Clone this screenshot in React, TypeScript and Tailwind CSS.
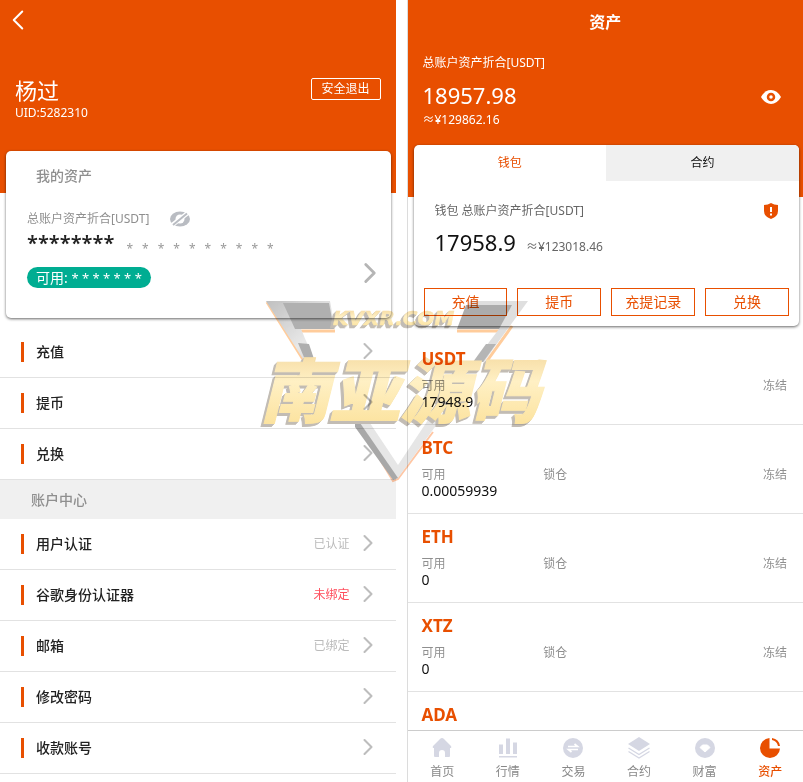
import type { FC, ReactNode } from "react";
import { ChevronLeft, ChevronRight } from "lucide-react";

type MenuItem = { label: string; status?: string; alert?: boolean };
type Coin = { name: string; amount?: string; locked?: boolean };
type NavItem = { label: string; icon: ReactNode; active?: boolean };

const walletMenu: MenuItem[] = [
    { label: "充值" },
    { label: "提币" },
    { label: "兑换" },
];

const accountMenu: MenuItem[] = [
    { label: "用户认证", status: "已认证" },
    { label: "谷歌身份认证器", status: "未绑定", alert: true },
    { label: "邮箱", status: "已绑定" },
    { label: "修改密码" },
    { label: "收款账号" },
];

const coins: Coin[] = [
    { name: "USDT", amount: "17948.9" },
    { name: "BTC", amount: "0.00059939", locked: true },
    { name: "ETH", amount: "0", locked: true },
    { name: "XTZ", amount: "0", locked: true },
    { name: "ADA" },
];

const actions = ["充值", "提币", "充提记录", "兑换"];

const navItems: NavItem[] = [
    {
        label: "首页",
        icon: (
            <path d="M11 1 Q12 1 13 2 L20 9 Q21 11 19 11 V19 Q19 20 18 20 H14 V16 a3 3 0 0 0 -6 0 V20 H4 Q3 20 3 19 V11 Q1 11 2 9 L9 2 Q10 1 11 1 Z" />
        ),
    },
    {
        label: "行情",
        icon: (
            <path d="M2 7.5h4v9.5h-4z M9 1.5h4v15.5h-4z M16 5.5h4v11.5h-4z M2 19h18v1.5h-18z" />
        ),
    },
    {
        label: "交易",
        icon: (
            <>
                <circle cx="11" cy="11" r="10" />
                <path
                    d="M6 9.5 H15.5 L12.5 7 M16 12.5 H6.5 L9.5 15"
                    fill="none"
                    stroke="#fff"
                    strokeWidth="1.7"
                />
            </>
        ),
    },
    {
        label: "合约",
        icon: (
            <>
                <path d="M11 0 L22 7 L11 14 L0 7 Z" />
                <path
                    d="M0.5 11 L11 17.5 L21.5 11 M0.5 14.5 L11 21 L21.5 14.5"
                    fill="none"
                    stroke="currentColor"
                    strokeWidth="1.3"
                />
            </>
        ),
    },
    {
        label: "财富",
        icon: (
            <>
                <circle cx="11" cy="11" r="10" />
                <path
                    d="M8.5 8 H13.5 L16 10.5 L11 15 L6 10.5 Z"
                    fill="#fff"
                    stroke="#fff"
                    strokeLinejoin="round"
                />
            </>
        ),
    },
    {
        label: "资产",
        active: true,
        icon: (
            <>
                <path d="M10.5 1 V11.5 H21 A10 10 0 1 1 10.5 1 Z" />
                <path d="M13 1 A9.5 9.5 0 0 1 21 9 H19 A8 8 0 0 0 13 3 Z" />
            </>
        ),
    },
];

const MenuRow: FC<MenuItem> = ({ label, status, alert }) => (
    <li className="border-b border-[#e2e2e2]">
        <a href="#" className="flex h-[50px] items-center pl-[21px] pr-[14px]">
            <span className="h-5 w-[3px] bg-[#e84f00]" />
            <span className="ml-3 flex-1 text-sm font-medium text-[#222]">
                {label}
            </span>
            {status && (
                <span
                    className={
                        alert
                            ? "mr-1 text-xs text-[#ff4f5e]"
                            : "mr-1 text-xs text-[#bbb]"
                    }
                >
                    {status}
                </span>
            )}
            <ChevronRight
                size={28}
                className="mb-[3px] text-[#bdbdbd]"
                strokeWidth={1.8}
            />
        </a>
    </li>
);

const ProfilePanel: FC = () => (
    <section className="min-w-0 flex-1 bg-white">
        <header className="h-[193px] bg-[#e84f00] px-[15px] text-white">
            <div className="flex h-10 items-center">
                <button type="button" aria-label="返回" className="-ml-[14px]">
                    <ChevronLeft size={34} strokeWidth={1.4} />
                </button>
            </div>
            <div className="flex items-start justify-between pt-9">
                <div>
                    <h1 className="text-[22px] leading-7">杨过</h1>
                    <p className="text-xs leading-[18px]">UID:5282310</p>
                </div>
                <button
                    type="button"
                    className="mt-[2px] h-[22px] w-[70px] rounded-xs border border-white text-xs"
                >
                    安全退出
                </button>
            </div>
        </header>

        <div className="relative -mt-[42px] mr-[5px] ml-[6px] flex h-[167px] flex-col rounded-[5px] bg-white pl-[21px] shadow-[0_1px_3px_rgba(0,0,0,0.6)]">
            <h2 className="ml-[9px] mt-[14px] text-sm leading-[22px] font-medium text-[#8f8f8f]">
                我的资产
            </h2>
            <div className="mt-[22px] flex items-center gap-5 text-xs leading-5 text-[#8f8f8f]">
                总账户资产折合[USDT]
                <button type="button" aria-label="显示资产">
                    <svg width="22" height="18" viewBox="0 0 22 18">
                        <ellipse cx="11" cy="9" rx="10" ry="7.5" fill="#b9bcc2" />
                        <circle cx="11" cy="9" r="4.5" fill="#fff" />
                        <path d="M2 16 L20 2" stroke="#fff" strokeWidth="4.5" />
                        <path d="M4 15 L18 3.500" stroke="#b9bcc2" strokeWidth="2" />
                    </svg>
                </button>
            </div>
            <div className="flex h-7 items-center gap-3">
                <span className="text-xl leading-7 font-semibold text-[#222]">
                    ********
                </span>
                <span className="flex gap-[9px] pt-3 text-xs text-[#999]">
                    {Array.from({ length: 10 }, (_, i) => (
                        <span key={i}>*</span>
                    ))}
                </span>
            </div>
            <div className="mt-[7px] flex items-center justify-between">
                <span className="h-[21px] rounded-full bg-[#00ad92] px-[9px] text-sm leading-[21px] text-white">
                    可用: <span className="text-[13px]">* * * * * * *</span>
                </span>
                <ChevronRight
                    size={34}
                    strokeWidth={2}
                    className="-mt-2 mr-1 text-[#b5b5b5]"
                />
            </div>
        </div>

        <ul className="mt-[9px]">
            {walletMenu.map((item) => (
                <MenuRow key={item.label} {...item} />
            ))}
        </ul>
        <h2 className="h-[39px] bg-[#f0f0f0] pl-[31px] text-sm leading-[40px] font-medium text-[#8f8f8f]">
            账户中心
        </h2>
        <ul>
            {accountMenu.map((item) => (
                <MenuRow key={item.label} {...item} />
            ))}
        </ul>
    </section>
);

const CoinRow: FC<Coin> = ({ name, amount, locked }) => (
    <li className="h-[89px] shrink-0 border-b border-[#e2e2e2] pl-[14px] pr-4 pt-[11px]">
        <h3 className="text-[17px] leading-6 font-bold text-[#e84f00]">{name}</h3>
        {amount && (
            <dl className="mt-[7px] grid grid-cols-3 text-xs leading-4 text-[#8f8f8f]">
                <div>
                    <dt>可用</dt>
                    <dd className="text-sm leading-4 text-[#111]">{amount}</dd>
                </div>
                <dt>{locked && "锁仓"}</dt>
                <dt className="text-right">冻结</dt>
            </dl>
        )}
    </li>
);

const AssetsPanel: FC = () => (
    <section className="flex h-screen min-w-0 flex-1 flex-col border-l border-[#dcdcdc] bg-white">
        <header className="h-[197px] shrink-0 bg-[#e84f00] px-[15px] text-white">
            <h1 className="text-center text-base leading-[44px] font-bold">
                资产
            </h1>
            <p className="mt-[9px] text-xs leading-5">总账户资产折合[USDT]</p>
            <div className="flex items-center justify-between pr-[7px] pt-2">
                <p className="text-[22px] leading-7">18957.98</p>
                <button type="button" aria-label="隐藏资产" className="pt-1">
                    <svg width="20" height="14" viewBox="0 0 20 14">
                        <path
                            d="M0 7 Q4 0 10 0 T20 7 Q16 14 10 14 T0 7 Z"
                            fill="#fff"
                        />
                        <circle
                            cx="10"
                            cy="7"
                            r="3"
                            fill="#fff"
                            stroke="#e84f00"
                            strokeWidth="2.5"
                        />
                    </svg>
                </button>
            </div>
            <p className="text-xs leading-[22px]">≈¥129862.16</p>
        </header>

        <div className="relative -mt-[52px] ml-[6px] mr-1 shrink-0 overflow-hidden rounded-[5px] bg-white shadow-[0_1px_3px_rgba(0,0,0,0.6)]">
            <div className="grid h-9 grid-cols-2 text-xs">
                <button type="button" className="text-[#e84f00]">
                    钱包
                </button>
                <button type="button" className="bg-[#f0f0f0] text-[#111]">
                    合约
                </button>
            </div>
            <div className="px-[10px] pb-[10px] pt-5">
                <div className="flex items-center justify-between pl-[11px] pr-[10px]">
                    <p className="text-xs leading-5 text-[#666]">
                        钱包 总账户资产折合[USDT]
                    </p>
                    <svg width="16" height="18" viewBox="0 0 16 18">
                        <path
                            d="M8 1 Q11 3 15 3 V9 Q15 14.5 8 17 Q1 14.5 1 9 V3 Q5 3 8 1 Z"
                            fill="#e84f00"
                        />
                        <path d="M8 5 V10 M8 11.5 V13.5" stroke="#fff" strokeWidth="2" />
                    </svg>
                </div>
                <p className="mt-[5px] flex items-baseline gap-[10px] pl-[11px] leading-8">
                    <span className="text-[22px] text-[#111]">17958.9</span>
                    <span className="text-xs text-[#666]">≈¥123018.46</span>
                </p>
                <div className="mt-[30px] grid grid-cols-4 gap-[10px]">
                    {actions.map((label) => (
                        <button
                            key={label}
                            type="button"
                            className="h-7 border border-[#e84f00] text-sm leading-6 text-[#e84f00]"
                        >
                            {label}
                        </button>
                    ))}
                </div>
            </div>
        </div>

        <ul className="mt-[10px] flex min-h-0 flex-1 flex-col overflow-hidden">
            {coins.map((coin) => (
                <CoinRow key={coin.name} {...coin} />
            ))}
        </ul>

        <nav className="grid h-[52px] shrink-0 grid-cols-6 border-t border-[#ccc] pl-[2px]">
            {navItems.map(({ label, icon, active }) => (
                <a
                    key={label}
                    href="#"
                    className={
                        active
                            ? "flex flex-col items-center pt-[6px] text-[#e84f00]"
                            : "flex flex-col items-center pt-[6px] text-[#d5d7e3]"
                    }
                >
                    <svg width="22" height="22" viewBox="0 0 22 22" fill="currentColor">
                        {icon}
                    </svg>
                    <span
                        className={
                            active
                                ? "mt-[5px] text-xs leading-4 font-medium"
                                : "mt-[5px] text-xs leading-4 text-[#888]"
                        }
                    >
                        {label}
                    </span>
                </a>
            ))}
        </nav>
    </section>
);

const Watermark: FC = () => (
    <svg
        className="pointer-events-none absolute inset-x-0 top-[295px] mx-auto h-[195px] w-[301px] mix-blend-multiply"
        viewBox="251 295 301 195"
        aria-hidden="true"
    >
        <defs>
            <linearGradient id="gold" x1="0" y1="0" x2="0" y2="1">
                <stop offset="0" stopColor="#f0cf90" />
                <stop offset="0.45" stopColor="#fff0c4" />
                <stop offset="1" stopColor="#fbdf94" />
            </linearGradient>
            <linearGradient id="steel" x1="0" y1="0" x2="1" y2="1">
                <stop offset="0" stopColor="#b5b5b5" />
                <stop offset="0.6" stopColor="#e4e4e4" />
                <stop offset="1" stopColor="#c4c4c4" />
            </linearGradient>
        </defs>
        <g opacity="0.85">
            <path
                d="M267 302 L304 361 M297 331 H335 M457 331 H499 M512 326 L487 361"
                stroke="#ffc38a"
                strokeWidth="3"
                fill="none"
            />
            <path d="M266 301 H330 L335 329 H301 L315 362 H305 Z" fill="url(#steel)" />
            <path d="M283 303 H329 L334 329 H295 Z" fill="#a3a3a3" />
            <path d="M298 343 L309 344 L315 362 H306 Z" fill="#a0a0a0" />
            <path d="M470 301 H528 L496 345 L484 362 H474 L499 329 H457 Z" fill="#dadada" />
            <path d="M466 305 H512 L499 329 H457 Z" fill="#9e9e9e" />
            <path d="M486 344 H496 L483 362 H473 Z" fill="#a8a8a8" />
            <path
                d="M356 420 L393 481 L398 479 L433 432"
                stroke="#ffbd94"
                strokeWidth="2"
                fill="none"
            />
            <path d="M355 420 H368 L398 465 L428 420 H440 L398 478 L393 480 Z" fill="#e2e2e2" />
            <path d="M355 420 L358 420 L398 478 L393 480 L355 427 Z" fill="#999" />
        </g>
        <g
            className="[filter:drop-shadow(-1px_1px_0_#c2bcb4)_drop-shadow(-2px_2px_0_#c2bcb4)]"
            fill="url(#gold)"
            stroke="url(#gold)"
        >
            <text
                x="333"
                y="325"
                fontSize="20"
                strokeWidth="0.5"
                className="font-[DejaVu_Sans,sans-serif] font-bold italic"
            >
                KVXR.COM
            </text>
            <text
                x="260"
                y="417"
                fontSize="70"
                strokeWidth="1"
                className="font-['Noto_Sans_CJK_SC',sans-serif] font-black italic"
            >
                南亚源码
            </text>
        </g>
    </svg>
);

export default function App() {
    return (
        <main className="relative flex min-h-screen gap-[11px] overflow-hidden bg-white font-['Noto_Sans','Noto_Sans_CJK_SC',sans-serif]">
            <ProfilePanel />
            <AssetsPanel />
            <Watermark />
        </main>
    );
}
